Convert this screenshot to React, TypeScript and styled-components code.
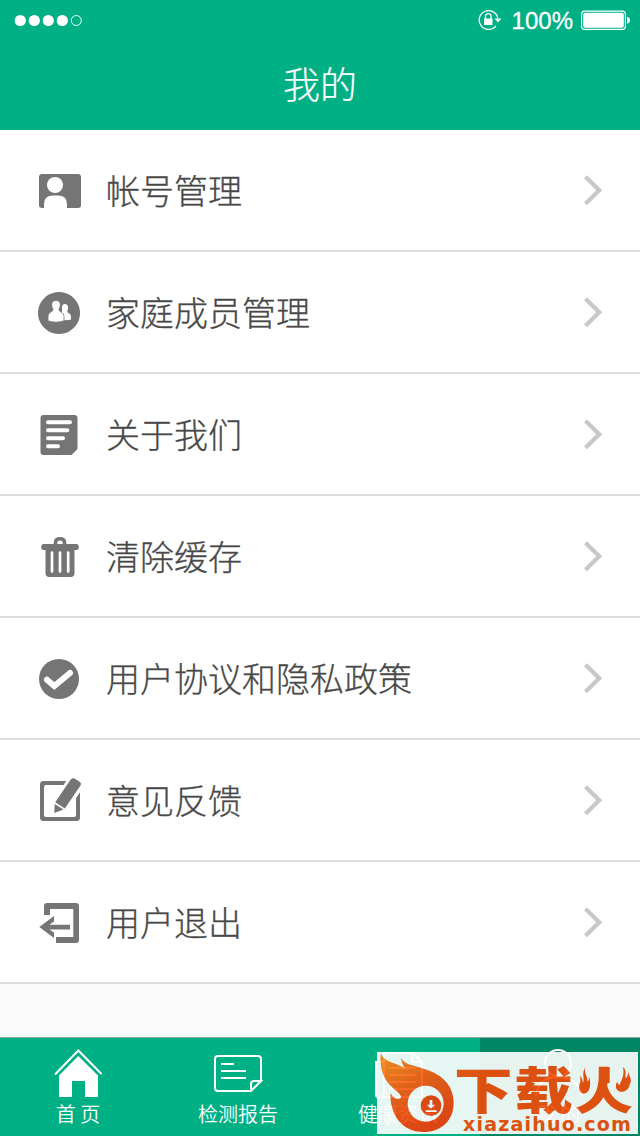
import React from 'react';
import styled, { createGlobalStyle } from 'styled-components';

const GREEN = '#00b085';
const ICON = '#757575';

const GlobalStyle = createGlobalStyle`
  * { box-sizing: border-box; }
  body { margin: 0; background: #fafafa; }
  svg { display: block; flex: none; }
`;

const Screen = styled.div`
  width: 640px;
  height: 1136px;
  display: flex;
  flex-direction: column;
  overflow: hidden;
  background: #fafafa;
  font-family: 'Noto Sans CJK SC', 'Liberation Sans', sans-serif;
  font-weight: 350;
`;

const Header = styled.header`
  height: 130px;
  background: ${GREEN};
  color: #fff;
`;

const StatusBar = styled.div`
  height: 40px;
  padding: 0 10px 0 14px;
  display: flex;
  align-items: center;
  justify-content: space-between;
`;

const StatusGroup = styled.div`
  display: flex;
  align-items: center;
`;

const Percent = styled.span`
  margin: 2px 8px 0 10px;
  font: 400 24px/30px 'Liberation Sans', sans-serif;
  -webkit-text-stroke: 0.3px #fff;
`;

const Title = styled.h1`
  margin: 0;
  height: 90px;
  line-height: 87px;
  text-align: center;
  font-size: 37px;
  font-weight: 300;
  -webkit-text-stroke: 0.2px #fff;
`;

const Menu = styled.ul`
  margin: 0;
  padding: 0;
  list-style: none;
  background: #fff;
`;

const MenuRow = styled.li`
  height: 122px;
  padding: 0 36px 0 38px;
  display: flex;
  align-items: center;
  border-bottom: 2px solid #dcdcdc;
`;

const MenuLabel = styled.span`
  flex: 1;
  margin-left: 24px;
  padding-bottom: 1px;
  font-size: 34px;
  font-weight: 300;
  line-height: 50px;
  color: #484848;
  -webkit-text-stroke: 0.3px #484848;
`;

const TabBar = styled.nav`
  position: relative;
  height: 99px;
  margin-top: auto;
  display: flex;
  border-top: 1px solid #8fa8a0;
  background: ${GREEN};
`;

const Tab = styled.div<{ $active?: boolean }>`
  width: 160px;
  padding: 10px 4px 0 0;
  display: flex;
  flex-direction: column;
  align-items: center;
  background: ${(p) => (p.$active ? '#008565' : 'transparent')};
`;

const TabLabel = styled.span`
  margin-top: 1px;
  font-size: 20px;
  line-height: 30px;
  color: #fff;
  white-space: pre;
`;

const Watermark = styled.div`
  position: absolute;
  right: 2px;
  bottom: 2px;
  width: 261px;
  height: 82px;
  display: flex;
  background: #fff;
  opacity: 0.9;
  color: #f54c07;
`;

const WatermarkText = styled.div`
  position: relative;
  flex: 1;
  display: flex;
  flex-direction: column;
  align-items: flex-start;
`;

const WatermarkName = styled.span`
  margin: 10px 0 2px -1px;
  font-size: 50px;
  line-height: 50px;
  font-weight: 900;
  letter-spacing: 1.5px;
  white-space: nowrap;
  transform: scaleX(1.17);
  transform-origin: left center;
`;

const WatermarkUrl = styled.span`
  margin-left: 8px;
  font: 700 19px/20px 'DejaVu Sans', sans-serif;
  letter-spacing: 1.2px;
  white-space: nowrap;
`;

const Flames = styled.svg`
  position: absolute;
  left: 122px;
  top: 13px;
`;

const RowIcon = ({ children }: { children: React.ReactNode }) => (
  <svg width="44" height="44" viewBox="0 0 44 44" fill={ICON}>{children}</svg>
);

const AccountIcon = () => (
  <RowIcon>
    <rect x="1" y="6" width="42" height="34" rx="3" />
    <circle cx="17" cy="17" r="8" fill="#fff" />
    <path d="M6 41V36Q6 27.5 15 27.5H20Q29 27.5 29 36V41Z" fill="#fff" />
  </RowIcon>
);

const FamilyIcon = () => (
  <RowIcon>
    <path d="M21 2a21 21 0 1 0 .01 0Z" />
    <path d="M26.500 14C29.500 14 30.600 16.400 30 19C29.700 20.500 29 21 29.300 22C30 23.500 33 23 33 27V29.500Q30 30.500 24 30V17C24.300 15 25.300 14 26.500 14Z" fill="#fff" />
    <path d="M18 10.500C21.500 10.500 22.700 13 22.200 16C21.900 18 20.800 18.500 21 20C21.500 22 26 22 26 27V31Q18 33.500 10 31V27C10 22 14.500 22 15 20C15.200 18.500 14.100 18 13.800 16C13.300 13 14.500 10.500 18 10.500Z" fill="#fff" stroke={ICON} strokeWidth=".8" />
  </RowIcon>
);

const AboutIcon = () => (
  <RowIcon>
    <path d="M5.500 3H36.500a3 3 0 0 1 3 3V37L33.500 43H5.500a3 3 0 0 1-3-3V6a3 3 0 0 1 3-3Z" />
    <path d="M10 10.300H32M10 18.300H29.300M10 26.300H25M10 34.300H20" stroke="#fff" strokeWidth="4" strokeLinecap="round" />
  </RowIcon>
);

const TrashIcon = () => (
  <RowIcon>
    <path d="M17.500 11V8.500Q17.500 4.800 22 4.800T26.500 8.500V11" fill="none" stroke={ICON} strokeWidth="3.600" />
    <rect x="3.300" y="10" width="37.400" height="6" rx="2.500" />
    <path d="M7.500 14H36.500V39a4 4 0 0 1-4 4H11.500a4 4 0 0 1-4-4Z" />
    <path d="M14 18.500V37.500M22 18.500V37.500M30.200 18.500V37.500" stroke="#fff" strokeWidth="2.700" strokeLinecap="round" />
  </RowIcon>
);

const AgreementIcon = () => (
  <RowIcon>
    <circle cx="21" cy="23" r="20" />
    <path d="M9 23.700L16.300 30L32 17" fill="none" stroke="#fff" strokeWidth="6" strokeLinecap="round" />
  </RowIcon>
);

const FeedbackIcon = () => (
  <RowIcon>
    <path fillRule="evenodd" d="M5.500 3H38.500A3.500 3.500 0 0 1 42 6.500V39.500A3.500 3.500 0 0 1 38.500 43H5.500A3.500 3.500 0 0 1 2 39.500V6.500A3.500 3.500 0 0 1 5.500 3ZM8 7A2 2 0 0 0 6 9V37A2 2 0 0 0 8 39H36A2 2 0 0 0 38 37V9A2 2 0 0 0 36 7Z" />
    <path d="M15.500 24L30.500-1H44V11.500L29 34L14 39Z" fill="#fff" />
    <path d="M38 20.500L42 14.500V39H38Z" />
    <path d="M17.200 24.200L32.500 1.700Q34-.6 36.500.6L41.500 3.800Q43.800 5.300 42.500 7.500L26.800 30.500Z" />
    <path d="M16.700 26L25.500 31.500L16.300 35Z" />
  </RowIcon>
);

const LogoutIcon = () => (
  <RowIcon>
    <path d="M6 15V6a3 3 0 0 1 3-3H38a3 3 0 0 1 3 3V40a3 3 0 0 1-3 3H18V37H35.300V9H12V15Z" />
    <path d="M1.300 27L16 16V21.500L11.500 24.700H32V29.500H11.500L16 32.500V38Z" />
  </RowIcon>
);

const Chevron = () => (
  <svg width="20" height="32" viewBox="0 0 20 32">
    <path d="M1.500 2.800L15.200 16.300L1.500 29.800" fill="none" stroke="#c8c8c8" strokeWidth="4.300" />
  </svg>
);

const TabIcon = ({ children }: { children: React.ReactNode }) => (
  <svg width="50" height="50" viewBox="0 0 50 50" fill="none" stroke="#fff" strokeWidth="2">{children}</svg>
);

const HomeIcon = () => (
  <TabIcon>
    <path d="M2 26.500L25.300 2.500L48.500 26" />
    <path d="M25.300 8L45 27.500V49H32V33H19V49H6V27.500Z" fill="#fff" stroke="none" />
  </TabIcon>
);

const ReportIcon = () => (
  <TabIcon>
    <path d="M48 33V11a3 3 0 0 0-3-3H5a3 3 0 0 0-3 3V40a3 3 0 0 0 3 3H38L48 33H41a3 3 0 0 0-3 3V43" />
    <path d="M8 16H21M8 23H33M8 30H33" />
  </TabIcon>
);

const NewsIcon = () => (
  <TabIcon>
    <path d="M11 5H40L49 14V49H5a2 2 0 0 1-2-2V14H11V5ZM11 14V44Q11 49 6 49M39 5V14H49" />
    <path d="M16 20H43M16 27H43M16 34H43M16 41H43" />
  </TabIcon>
);

const MineIcon = () => (
  <TabIcon>
    <circle cx="25" cy="15" r="13" />
    <path d="M3 48Q5 29 25 29T49 48" />
  </TabIcon>
);

const SignalDots = () => (
  <svg width="70" height="14" viewBox="0 0 70 14" fill="#fff">
    {[6.300, 20.300, 34.300, 48.300].map((x) => <circle key={x} cx={x} cy="7.500" r="5.600" />)}
    <circle cx="62.300" cy="7.500" r="5" fill="none" stroke="#fff" />
  </svg>
);

const RotationLock = () => (
  <svg width="24" height="22" viewBox="0 0 24 22" fill="none" stroke="#fff" strokeWidth="1.300">
    <path d="M19.800 9A9.400 9.400 0 1 0 18 16.800" />
    <path d="M16.500 9.500H23.500L20 13.500Z" fill="#fff" stroke="none" />
    <path d="M7.500 10V7.500a2.800 2.800 0 0 1 5.600 0V10" />
    <rect x="6" y="9.500" width="8.500" height="6.500" fill="#fff" stroke="none" />
  </svg>
);

const Battery = () => (
  <svg width="49" height="20" viewBox="0 0 49 20" fill="#fff">
    <rect x=".6" y="1.100" width="43.800" height="18.300" rx="3" fill="none" stroke="#fff" strokeWidth="1.100" />
    <rect x="2.200" y="2.700" width="40.600" height="15.100" rx="2" />
    <path d="M46 6.800Q49 7.500 49 10.300T46 13.800Z" />
  </svg>
);

const FlameLogo = () => (
  <svg width="78" height="82" viewBox="111 96 234 246">
    <defs>
      <linearGradient id="flame" x1="0" y1="0" x2=".5" y2="1">
        <stop offset="0" stopColor="#ff9018" />
        <stop offset=".45" stopColor="#f85c10" />
        <stop offset="1" stopColor="#f43b08" />
      </linearGradient>
    </defs>
    <path
      fill="url(#flame)"
      d="M122 100C133 127 160 126 194 144C188 134 184 125 183 113C195 136 220 134 251 146C304 161 341 195 341 248C341 302 303 336 250 336C203 336 169 308 157 265C152 247 150 232 152 218C158 235 174 241 183 233C183 224 175 217 162 207C131 182 118 146 122 100Z"
    />
    <ellipse cx="257" cy="251" rx="54" ry="54" fill="#fff" />
    <circle cx="273" cy="257" r="31" fill="#f04008" />
    <path d="M269 240H277V254H285L273 266L261 254H269ZM257 271H290V276H257Z" fill="#fff" />
  </svg>
);

const rows = [
  { label: '帐号管理', Icon: AccountIcon },
  { label: '家庭成员管理', Icon: FamilyIcon },
  { label: '关于我们', Icon: AboutIcon },
  { label: '清除缓存', Icon: TrashIcon },
  { label: '用户协议和隐私政策', Icon: AgreementIcon },
  { label: '意见反馈', Icon: FeedbackIcon },
  { label: '用户退出', Icon: LogoutIcon },
];

const tabs = [
  { label: '首 页', Icon: HomeIcon },
  { label: '检测报告', Icon: ReportIcon },
  { label: '健康资讯', Icon: NewsIcon },
  { label: '我 的', Icon: MineIcon, active: true },
];

export default function App() {
  return (
    <Screen>
      <GlobalStyle />
      <Header>
        <StatusBar>
          <SignalDots />
          <StatusGroup>
            <RotationLock />
            <Percent>100%</Percent>
            <Battery />
          </StatusGroup>
        </StatusBar>
        <Title>我的</Title>
      </Header>
      <Menu>
        {rows.map(({ label, Icon }) => (
          <MenuRow key={label}>
            <Icon />
            <MenuLabel>{label}</MenuLabel>
            <Chevron />
          </MenuRow>
        ))}
      </Menu>
      <TabBar>
        {tabs.map(({ label, Icon, active }) => (
          <Tab key={label} $active={active}>
            <Icon />
            <TabLabel>{label}</TabLabel>
          </Tab>
        ))}
        <Watermark>
          <FlameLogo />
          <WatermarkText>
            <WatermarkName>下载火</WatermarkName>
            <WatermarkUrl>xiazaihuo.com</WatermarkUrl>
            <Flames width="56" height="30" viewBox="294 136 168 90" fill="#f54c07">
              <path d="M294 136H358V186L340 226H294ZM396 136H462V226H412L396 190Z" fill="#fff" />
              <path d="M362 142H392V190H362Z" />
              <path d="M320 142C312 158 328 172 325 186C331 182 330 174 329 168C338 190 334 220 315 222C300 220 297 205 303 190C306 180 303 176 304 168C310 176 311 184 312 190C318 176 306 160 320 142Z" />
              <path d="M432 142C444 152 438 164 440 176C446 172 446 164 450 156C448 170 462 178 452 194C450 210 436 219 424 216C410 212 407 198 415 186C417 192 419 196 422 196C424 184 438 172 432 142Z" />
            </Flames>
          </WatermarkText>
        </Watermark>
      </TabBar>
    </Screen>
  );
}
